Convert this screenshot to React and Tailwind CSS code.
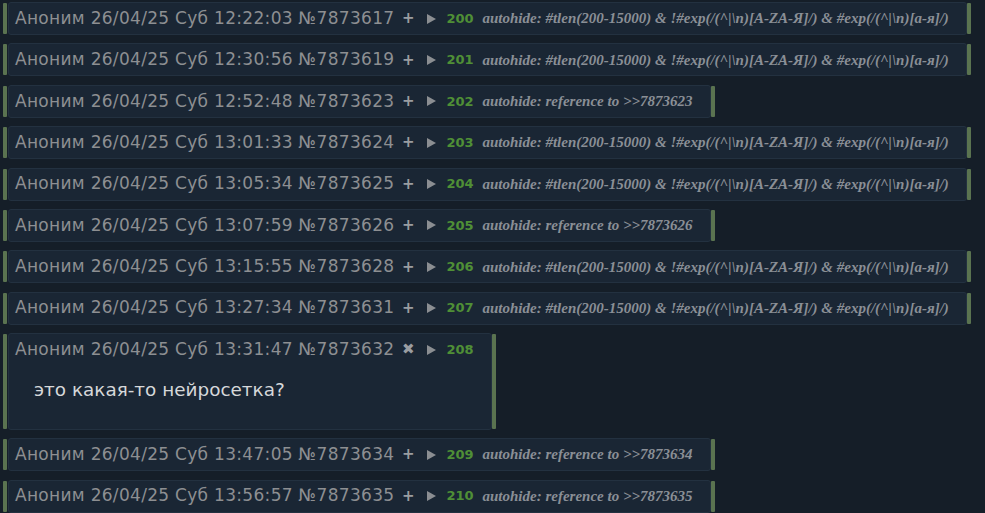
import React from 'react';

const FULL = 'autohide: #tlen(200-15000) & !#exp(/(^|\\n)[A-ZA-Я]/) & #exp(/(^|\\n)[а-я]/)';

const posts = [
  { time: '12:22:03', num: '7873617', idx: 200, hide: FULL },
  { time: '12:30:56', num: '7873619', idx: 201, hide: FULL },
  { time: '12:52:48', num: '7873623', idx: 202, hide: 'autohide: reference to >>7873623' },
  { time: '13:01:33', num: '7873624', idx: 203, hide: FULL },
  { time: '13:05:34', num: '7873625', idx: 204, hide: FULL },
  { time: '13:07:59', num: '7873626', idx: 205, hide: 'autohide: reference to >>7873626' },
  { time: '13:15:55', num: '7873628', idx: 206, hide: FULL },
  { time: '13:27:34', num: '7873631', idx: 207, hide: FULL },
  { time: '13:31:47', num: '7873632', idx: 208, body: 'это какая-то нейросетка?' },
  { time: '13:47:05', num: '7873634', idx: 209, hide: 'autohide: reference to >>7873634' },
  { time: '13:56:57', num: '7873635', idx: 210, hide: 'autohide: reference to >>7873635' },
];

function Header({ post }) {
  const open = !!post.body;
  return (
    <div className="flex items-center h-[31px] whitespace-nowrap">
      <span className="text-[17px] text-[#8d8f92] font-['DejaVu_Sans',sans-serif] tracking-[0.3px]">
        Аноним 26/04/25 Суб {post.time} №{post.num}
      </span>
      <span className="ml-[8px] w-[12px] flex justify-center text-[#9a9da1] font-['DejaVu_Sans',sans-serif] font-bold text-[15px]">
        {open ? '✖' : '+'}
      </span>
      <svg className="ml-[13px]" width="9" height="10" viewBox="0 0 9 10">
        <path d="M0 0 L9 5 L0 10 Z" fill="#8b8e92" />
      </svg>
      <span className="ml-[10px] text-[13px] font-bold text-[#4f8f36] font-['DejaVu_Sans',sans-serif]">
        {post.idx}
      </span>
      {post.hide && (
        <span className="ml-[9px] text-[15px] italic font-bold text-[#8a8f96] font-['Liberation_Serif',serif]">
          {post.hide}
        </span>
      )}
    </div>
  );
}

function Post({ post }) {
  return (
    <div className="flex items-stretch">
      <div className="w-[4px] ml-[3px] my-[1px] bg-[#5a7350] rounded-[1px]" />
      <div className="ml-[1px] bg-[#1a2634] border border-[#233140] rounded-[3px] pl-[6px] pr-[17px]">
        <Header post={post} />
        {post.body && (
          <div className="pl-[19px] pt-[11px] pb-[25px] text-[18.4px] text-[#d6d8da] font-['DejaVu_Sans',sans-serif]">
            {post.body}
          </div>
        )}
      </div>
      <div className="w-[4px] my-[1px] bg-[#5a7350] rounded-[1px]" />
    </div>
  );
}

export default function App() {
  return (
    <div className="w-[985px] h-[513px] overflow-hidden bg-[#151e28] pt-[2px] flex flex-col gap-[8.4px]">
      {posts.map((p) => (
        <Post key={p.num} post={p} />
      ))}
    </div>
  );
}
